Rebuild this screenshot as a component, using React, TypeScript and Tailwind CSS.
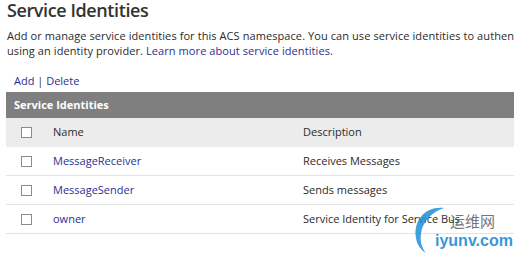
import React from "react";

const font = { fontFamily: '"Open Sans", "Noto Sans", "Liberation Sans", sans-serif' };

function Box() {
  return <div className="w-[11px] h-[11px] border border-[#8c8c8c] bg-white shrink-0" />;
}

const rows = [
  { name: "MessageReceiver", desc: "Receives Messages" },
  { name: "MessageSender", desc: "Sends messages" },
  { name: "owner", desc: "Service Identity for Service Bus" },
];

export default function App() {
  return (
    <div className="relative w-[514px] h-[256px] overflow-hidden bg-white text-[#2b2b2b]" style={font}>
      <div className="pl-[7px]">
        <h1 className="text-[18px] font-semibold leading-[20px] text-[#333] tracking-[-0.4px] whitespace-nowrap">Service Identities</h1>
        <p className="mt-[8px] text-[11px] leading-[15px] whitespace-nowrap tracking-[0.08px]">
          Add or manage service identities for this ACS namespace. You can use service identities to authenticate
          <br />
          using an identity provider. <a className="text-[#2e2e92]">Learn more about service identities</a>.
        </p>
        <div className="mt-[15px] pl-[7px] text-[11px] leading-[15px] text-[#2e2e92]">
          Add <span className="text-[#333]">|</span> Delete
        </div>
      </div>
      <div className="ml-[6px] mt-[4px]">
        <div className="h-[26px] bg-[#7f7f7f] flex items-center pl-[8px] text-white text-[11px] font-bold">Service Identities</div>
        <div className="h-[29px] bg-[#ececec] flex items-center text-[11px]">
          <div className="w-[47px] pl-[15px]"><Box /></div>
          <div className="w-[250px]">Name</div>
          <div>Description</div>
        </div>
        {rows.map((r) => (
          <div key={r.name} className="h-[29px] border-b border-[#e3e3e3] flex items-center text-[11px]">
            <div className="w-[47px] pl-[15px]"><Box /></div>
            <div className="w-[250px] text-[#2e2e92]">{r.name}</div>
            <div className="whitespace-nowrap">{r.desc}</div>
          </div>
        ))}
      </div>
      <div className="absolute left-[410px] top-[204px] w-[104px] h-[50px] pointer-events-none">
        <svg className="absolute left-0 top-0" width="40" height="50" viewBox="0 0 40 50">
          <path d="M34 4 C16 2 3 16 6 34 C7 41 11 46 16 49 C11 43 10 36 11 30 C12 18 22 8 34 4 Z" fill="#1e8fd6" opacity="0.85" />
        </svg>
        <div className="absolute left-[40px] top-[8px] text-[15px] leading-[18px] text-[#555] opacity-80 whitespace-nowrap" style={{ fontFamily: '"Noto Sans CJK SC", sans-serif' }}>运维网</div>
        <div className="absolute left-[25px] top-[28px] text-[16px] leading-[18px] font-bold text-[#1e8fd6] opacity-90 whitespace-nowrap" style={{ fontFamily: '"Liberation Sans", sans-serif' }}>iyunv.com</div>
      </div>
    </div>
  );
}
